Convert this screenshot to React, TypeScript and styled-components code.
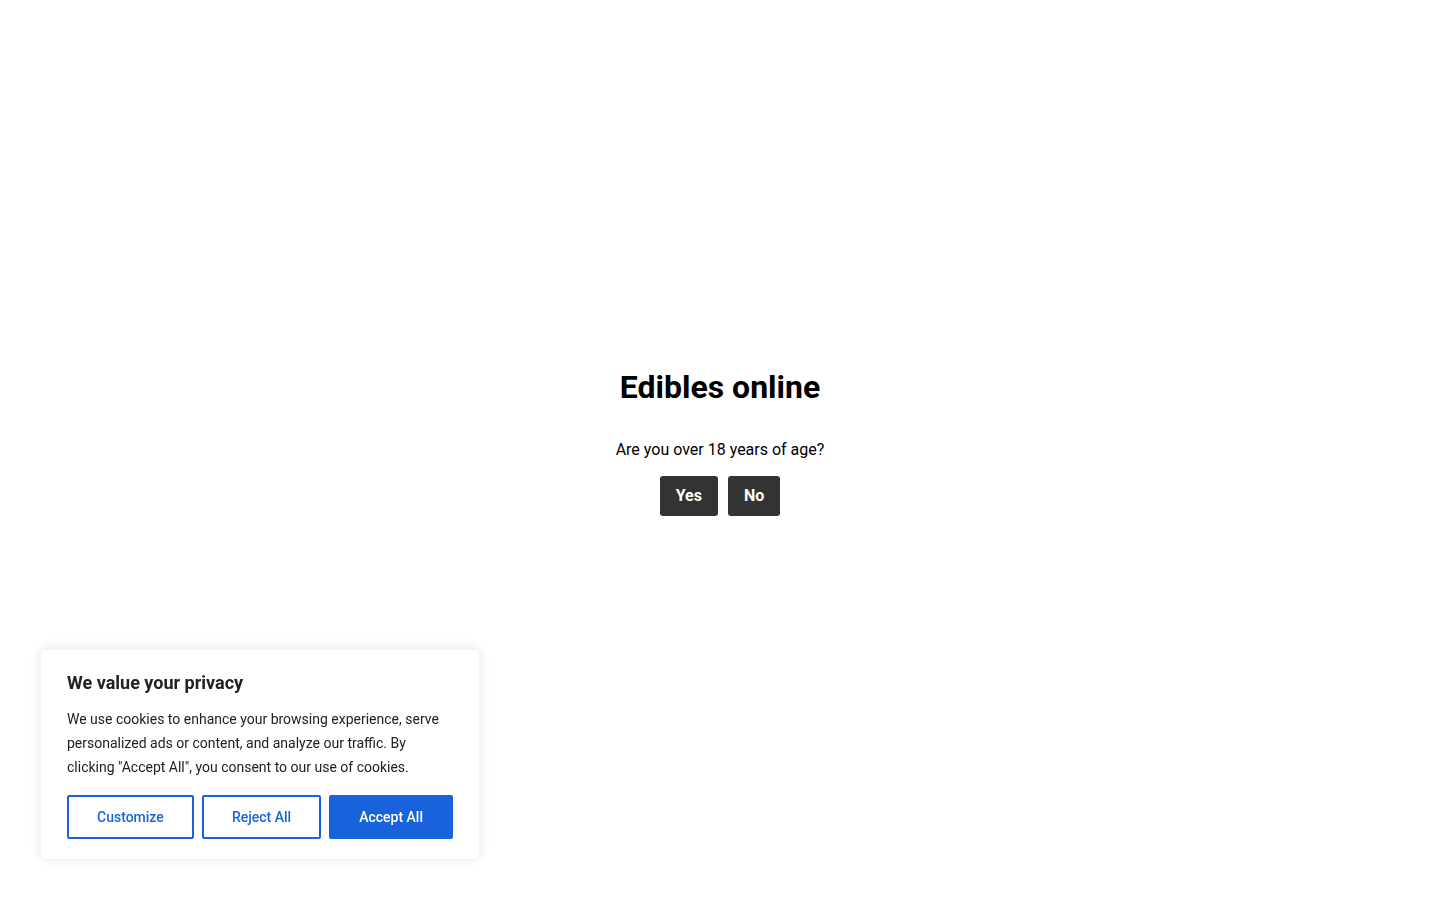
import React from "react";
import styled, { createGlobalStyle } from "styled-components";

const Global = createGlobalStyle`
  html, body { margin: 0; padding: 0; background: #ffffff; }
  body { font-family: Roboto, "Liberation Sans", Arial, sans-serif; color: #000; }
  * { box-sizing: border-box; }
`;

const Page = styled.main`
  min-height: 100vh;
  display: flex;
  flex-direction: column;
  align-items: center;
  justify-content: center;
  padding-bottom: 16px;
  text-align: center;
`;

const Title = styled.h1`
  margin: 0;
  font-size: 32px;
  line-height: 38px;
  font-weight: 700;
  color: #000;
`;

const Question = styled.p`
  margin: 32px 0 14px;
  font-size: 16px;
  line-height: 24px;
  color: #000;
`;

const ButtonRow = styled.div`
  display: flex;
  gap: 10px;
  justify-content: center;
`;

const GateButton = styled.button`
  height: 40px;
  padding: 0 16px 2px;
  border: none;
  border-radius: 3px;
  background: #333333;
  color: #ffffff;
  font-family: inherit;
  font-size: 16px;
  font-weight: 700;
  cursor: pointer;
`;

const Banner = styled.section`
  position: fixed;
  left: 40px;
  bottom: 40px;
  width: 440px;
  background: #ffffff;
  border: 1px solid #f4f4f4;
  border-radius: 6px;
  box-shadow: 0 -1px 10px 0 rgba(172, 171, 171, 0.3);
  padding: 21px 26px 20px;
  text-align: left;
`;

const BannerTitle = styled.p`
  margin: 0 0 12px;
  font-size: 18px;
  line-height: 24px;
  font-weight: 700;
  color: #212121;
`;

const BannerText = styled.p`
  margin: 0;
  font-size: 14px;
  line-height: 24px;
  color: #212121;
`;

const BannerActions = styled.div`
  display: flex;
  gap: 8px;
  margin-top: 16px;
`;

const CkyButton = styled.button<{ $primary?: boolean }>`
  flex: 1 1 auto;
  padding: 8px 27px;
  border: 2px solid #1863dc;
  border-radius: 2px;
  background: ${(p) => (p.$primary ? "#1863dc" : "transparent")};
  color: ${(p) => (p.$primary ? "#ffffff" : "#1863dc")};
  font-family: inherit;
  font-size: 14px;
  line-height: 24px;
  font-weight: 500;
  cursor: pointer;
  white-space: nowrap;
`;

export default function App() {
  return (
    <>
      <Global />
      <Page>
        <Title>Edibles online</Title>
        <Question>Are you over 18 years of age?</Question>
        <ButtonRow>
          <GateButton>Yes</GateButton>
          <GateButton>No</GateButton>
        </ButtonRow>
      </Page>
      <Banner>
        <BannerTitle>We value your privacy</BannerTitle>
        <BannerText>
          We use cookies to enhance your browsing experience, serve personalized ads or content, and analyze our
          traffic. By clicking "Accept All", you consent to our use of cookies.
        </BannerText>
        <BannerActions>
          <CkyButton>Customize</CkyButton>
          <CkyButton>Reject All</CkyButton>
          <CkyButton $primary>Accept All</CkyButton>
        </BannerActions>
      </Banner>
    </>
  );
}
